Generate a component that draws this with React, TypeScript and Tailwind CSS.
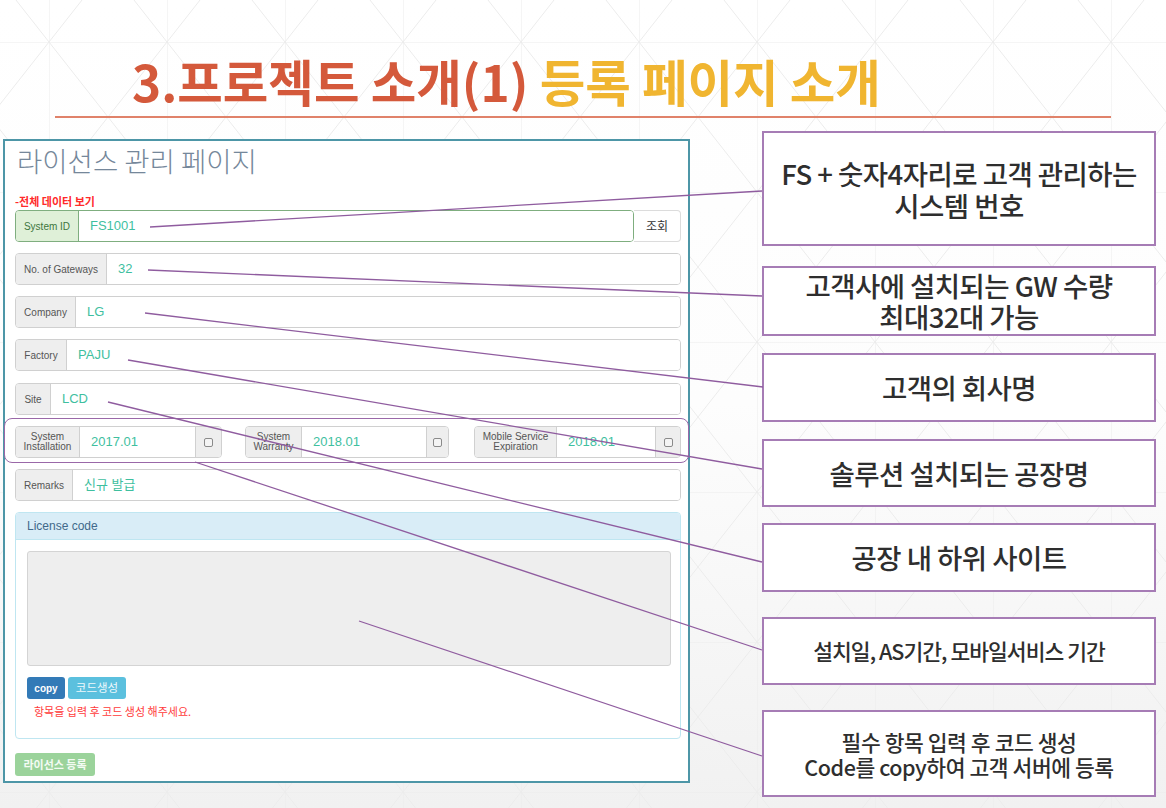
import React from "react";

const KR = { fontFamily: '"Noto Sans CJK KR", "Noto Sans", sans-serif' };
const BS = { fontFamily: '"Liberation Sans", "Noto Sans CJK KR", Arial, sans-serif' };

function Field({
  label,
  labelW,
  value,
  success,
}: {
  label: React.ReactNode;
  labelW: number;
  value: string;
  success?: boolean;
}) {
  return (
    <div
      className={`flex h-[32px] flex-1 overflow-hidden rounded-[4px] border ${
        success ? "border-[#7fae7f]" : "border-[#d0d0d0]"
      } shadow-[inset_0_1px_1px_rgba(0,0,0,0.06)]`}
    >
      <div
        className={`flex shrink-0 items-center justify-center border-r text-[10px] ${
          success
            ? "border-[#7fae7f] bg-[#dff0d8] text-[#3c763d]"
            : "border-[#d0d0d0] bg-[#eeeeee] text-[#555]"
        }`}
        style={{ width: labelW }}
      >
        {label}
      </div>
      <div className="flex flex-1 items-center bg-white pl-[11px] text-[13px] text-[#3fbf9f]">
        {value}
      </div>
    </div>
  );
}

function DateField({
  l1,
  l2,
  labelW,
  inputW,
  addonW,
  value,
}: {
  l1: string;
  l2: string;
  labelW: number;
  inputW: number;
  addonW: number;
  value: string;
}) {
  return (
    <div className="flex h-[32px] overflow-hidden rounded-[4px] border border-[#d0d0d0]">
      <div
        className="flex shrink-0 flex-col items-center justify-center border-r border-[#d0d0d0] bg-[#eeeeee] text-[10px] leading-[10px] text-[#555]"
        style={{ width: labelW }}
      >
        <span>{l1}</span>
        <span>{l2}</span>
      </div>
      <div
        className="flex items-center bg-white pl-[11px] text-[13px] text-[#3fbf9f]"
        style={{ width: inputW }}
      >
        {value}
      </div>
      <div
        className="flex items-center justify-center border-l border-[#d0d0d0] bg-[#eeeeee]"
        style={{ width: addonW }}
      >
        <div className="h-[9px] w-[9px] rounded-[2px] border border-[#8a8a8a] bg-[#f4f4f4]" />
      </div>
    </div>
  );
}

function LeftPanel() {
  return (
    <div
      className="relative ml-[3px] mt-[8px] h-[644px] w-[687px] border-2 border-[#4d96a7] bg-white pl-[10px] pr-[7px]"
      style={BS}
    >
      <div
        className="h-[38px] pl-[2px] text-[27.5px] leading-[38px] text-[#75879a]"
        style={{ fontFamily: '"Noto Sans CJK KR", sans-serif', fontWeight: 300 }}
      >
        라이선스 관리 페이지
      </div>
      <div
        className="mt-[14px] h-[17px] text-[11px] font-bold leading-[17px] text-[#ff2a2a]"
        style={KR}
      >
        -전체 데이터 보기
      </div>
      {/* System ID */}
      <div className="flex h-[32px]">
        <Field label="System ID" labelW={63} value="FS1001" success />
        <div
          className="flex w-[47px] items-center justify-center rounded-r-[4px] border border-l-0 border-[#dcdcdc] bg-white text-[12px] text-[#333]"
          style={KR}
        >
          조회
        </div>
      </div>
      <div className="mt-[11px] flex">
        <Field label="No. of Gateways" labelW={91} value="32" />
      </div>
      <div className="mt-[11px] flex">
        <Field label="Company" labelW={60} value="LG" />
      </div>
      <div className="mt-[11px] flex">
        <Field label="Factory" labelW={51} value="PAJU" />
      </div>
      <div className="mt-[12px] flex">
        <Field label="Site" labelW={35} value="LCD" />
      </div>
      {/* dates */}
      <div className="mt-[11px] flex h-[32px]">
        <DateField l1="System" l2="Installation" labelW={64} inputW={115} addonW={26} value="2017.01" />
        <div className="ml-[23px]">
          <DateField l1="System" l2="Warranty" labelW={56} inputW={124} addonW={22} value="2018.01" />
        </div>
        <div className="ml-[25px]">
          <DateField l1="Mobile Service" l2="Expiration" labelW={82} inputW={98} addonW={25} value="2018.01" />
        </div>
      </div>
      <div className="mt-[11px] flex">
        <Field label="Remarks" labelW={57} value="신규 발급" />
      </div>
      {/* license code */}
      <div className="mt-[11px] h-[227px] overflow-hidden rounded-[4px] border border-[#bfe6f1] bg-white">
        <div className="flex h-[27px] items-center border-b border-[#bfe6f1] bg-[#d9edf7] pl-[11px] text-[12px] text-[#41698a]">
          License code
        </div>
        <div className="ml-[11px] mr-[9px] mt-[11px] h-[115px] rounded-[3px] border border-[#d4d4d4] bg-[#eeeeee]" />
        <div className="ml-[11px] mt-[11px] flex h-[22px] gap-[3px]">
          <div className="flex w-[38px] items-center justify-center rounded-[3px] bg-[#337ab7] text-[10px] font-bold text-white">
            copy
          </div>
          <div
            className="flex w-[58px] items-center justify-center rounded-[3px] bg-[#5bc0de] text-[11.5px] text-[#eef8fc]"
            style={KR}
          >
            코드생성
          </div>
        </div>
        <div className="ml-[18px] mt-[4px] text-[11px] text-[#ff3b3b]" style={KR}>
          항목을 입력 후 코드 생성 해주세요.
        </div>
      </div>
      <div
        className="mt-[14px] flex h-[23px] w-[80px] items-center justify-center rounded-[3px] bg-[#9bd39b] text-[11px] font-bold text-[#f4fbf4]"
        style={KR}
      >
        라이선스 등록
      </div>
      {/* annotation outline around the dates row */}
      <div className="absolute left-[-1px] top-[277px] h-[45px] w-[685px] rounded-[8px] border-[1.5px] border-[#9a68a8]" />
    </div>
  );
}

function Box({
  h,
  mt,
  size,
  lh,
  track = -0.02,
  lines,
}: {
  h: number;
  mt: number;
  size: number;
  lh: number;
  track?: number;
  lines: string[];
}) {
  return (
    <div
      className="flex flex-col items-center justify-center border-2 border-[#a67cb5] bg-white text-center font-medium text-[#2e2e2e]"
      style={{
        height: h,
        marginTop: mt,
        fontSize: size,
        lineHeight: `${lh}px`,
        letterSpacing: `${track}em`,
        ...KR,
      }}
    >
      {lines.map((l) => (
        <div key={l} className="whitespace-nowrap">
          {l}
        </div>
      ))}
    </div>
  );
}

function RightColumn() {
  return (
    <div className="ml-[72px] flex w-[394px] flex-col">
      <Box h={115} mt={0} size={27.5} lh={32} lines={["FS + 숫자4자리로 고객 관리하는", "시스템 번호"]} />
      <Box h={70} mt={20} size={27.5} lh={31} lines={["고객사에 설치되는 GW 수량", "최대32대 가능"]} />
      <Box h={69} mt={17} size={27.5} lh={31} lines={["고객의 회사명"]} />
      <Box h={68} mt={17} size={27.5} lh={31} lines={["솔루션 설치되는 공장명"]} />
      <Box h={69} mt={16} size={27.5} lh={31} lines={["공장 내 하위 사이트"]} />
      <Box h={68} mt={25} size={21.5} lh={26} track={-0.045} lines={["설치일, AS기간, 모바일서비스 기간"]} />
      <Box h={87} mt={25} size={21.5} lh={25} lines={["필수 항목 입력 후 코드 생성", "Code를 copy하여 고객 서버에 등록"]} />
    </div>
  );
}

export default function App() {
  const lines: [number, number, number, number][] = [
    [150, 227, 762, 191],
    [148, 270, 762, 296],
    [145, 313, 763, 387],
    [128, 360, 762, 469],
    [108, 402, 762, 562],
    [195, 462, 762, 650],
    [359, 621, 762, 756],
  ];
  return (
    <div className="relative h-[808px] w-[1166px] overflow-hidden bg-gradient-to-b from-white via-[#fdfdfd] to-[#f1f1f1]">
      <svg className="pointer-events-none absolute inset-0" width={1166} height={808}>
        <defs>
          <pattern id="tri" x={49} y={42} width={118} height={150} patternUnits="userSpaceOnUse">
            <path
              d="M0 0 V150 M0 0 H118 M0 0 L118 150 M118 0 L0 150"
              stroke="#ececec"
              strokeWidth={1}
              fill="none"
            />
          </pattern>
        </defs>
        <rect width={1166} height={808} fill="url(#tri)" />
      </svg>
      <div className="relative">
        <div className="h-[116px] pt-[51px]">
          <h1 className="ml-[132px] whitespace-nowrap text-[49.5px] font-bold leading-[60px]" style={KR}>
            <span className="text-[#d4593b]">3.프로젝트 소개(1)</span>{" "}
            <span className="text-[#f0b530]">등록 페이지 소개</span>
          </h1>
        </div>
        <div className="ml-[55px] h-[2px] w-[1056px] bg-[#e0826a]" />
        <div className="mt-[13px] flex">
          <LeftPanel />
          <RightColumn />
        </div>
      </div>
      <svg className="pointer-events-none absolute inset-0" width={1166} height={808}>
        {lines.map(([x1, y1, x2, y2], i) => (
          <line key={i} x1={x1} y1={y1} x2={x2} y2={y2} stroke="#8f5c9f" strokeWidth={1.3} />
        ))}
      </svg>
    </div>
  );
}
